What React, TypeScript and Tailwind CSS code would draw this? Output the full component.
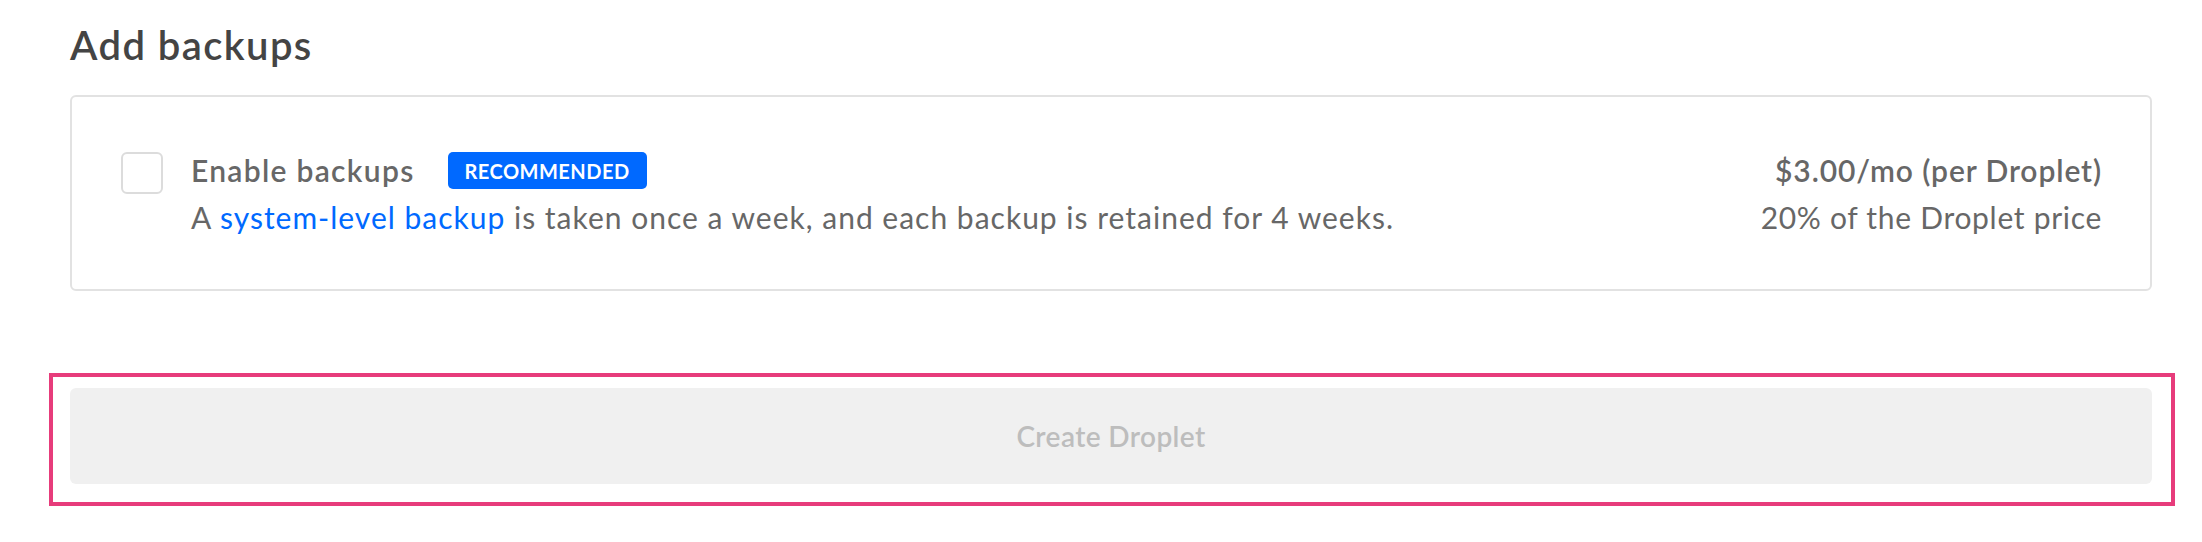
import React from 'react';

const App = () => {
  return (
    <div className="w-[2202px] h-[542px] bg-white font-['Lato',sans-serif]">
      {/* Backups section */}
      <div className="pl-[70px] pr-[50px] pt-[21px]">
        <h2 className="text-[40px] leading-[48px] font-semibold tracking-[1.4px] text-[#444444]">Add backups</h2>

        <div className="mt-[26px] h-[196px] rounded-[6px] border-2 border-[#e2e2e2] pl-[49px] pr-[48px] pt-[55px] flex items-start">
          <div className="w-[42px] h-[42px] shrink-0 rounded-[6px] border-2 border-[#dcdcdc] bg-white" />

          <div className="ml-[28px] flex-1">
            <div className="h-[37px] flex items-center">
              <span className="text-[30px] font-semibold tracking-[1.3px] text-[#676767]">Enable backups</span>
              <span className="ml-[33px] w-[199px] h-[37px] flex items-center justify-center rounded-[5px] bg-[#0069ff] text-white text-[20px] font-bold tracking-[0.5px]">
                RECOMMENDED
              </span>
            </div>
            <p className="mt-[10px] text-[30px] leading-[36px] tracking-[1px] text-[#676767]">
              A <a className="text-[#0069ff]">system-level backup</a> is taken once a week, and each backup is retained for 4 weeks.
            </p>
          </div>

          <div className="flex flex-col items-end text-[#676767]">
            <div className="h-[37px] flex items-center text-[30px] font-semibold tracking-[0.9px]">$3.00/mo (per Droplet)</div>
            <div className="mt-[10px] text-[30px] leading-[36px] tracking-[0.7px]">20% of the Droplet price</div>
          </div>
        </div>
      </div>

      {/* Highlighted submit area */}
      <div className="mt-[82px] ml-[49px] w-[2126px] border-4 border-[#e73c7b] pl-[17px] pr-[19px] pt-[11px] pb-[18px]">
        <button
          type="button"
          disabled
          className="w-full h-[96px] rounded-[6px] bg-[#f0f0f0] text-[28px] font-semibold tracking-[0.4px] text-[#bdbdbd]"
        >
          Create Droplet
        </button>
      </div>
    </div>
  );
};

export default App;
